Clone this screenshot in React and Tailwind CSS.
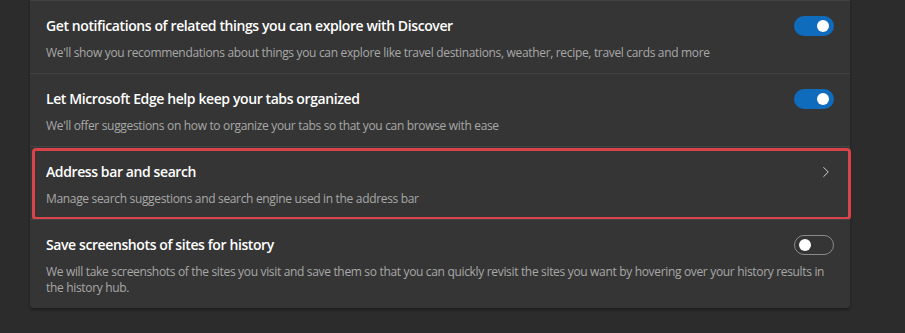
import { ChevronRight } from 'lucide-react';

const rows = [
    {
        title: 'Get notifications of related things you can explore with Discover',
        desc: "We'll show you recommendations about things you can explore like travel destinations, weather, recipe, travel cards and more",
        control: 'on',
    },
    {
        title: 'Let Microsoft Edge help keep your tabs organized',
        desc: "We'll offer suggestions on how to organize your tabs so that you can browse with ease",
        control: 'on',
    },
    {
        title: 'Address bar and search',
        desc: 'Manage search suggestions and search engine used in the address bar',
        control: 'chevron',
        highlight: true,
    },
    {
        title: 'Save screenshots of sites for history',
        desc: 'We will take screenshots of the sites you visit and save them so that you can quickly revisit the sites you want by hovering over your history results in the history hub.',
        control: 'off',
    },
];

const Toggle = ({ on }) =>
    on ? (
        <div className="w-[40px] h-[20px] rounded-full bg-[#0f6cbd] flex items-center justify-end pr-[5px]">
            <div className="w-[12px] h-[12px] rounded-full bg-white" />
        </div>
    ) : (
        <div className="w-[40px] h-[20px] rounded-full border border-[#8a8a8a] flex items-center pl-[4px]">
            <div className="w-[12px] h-[12px] rounded-full bg-white" />
        </div>
    );

const Row = ({ row }) => (
    <div className="relative px-4 pt-[15px] pb-[12px] border-t border-[#424242]">
        <div className="flex items-center">
            <div className="flex-1 text-[14px] leading-[20px] font-semibold text-white tracking-[-0.4px]">{row.title}</div>
            {row.control === 'chevron' ? (
                <ChevronRight size={18} strokeWidth={1.3} className="text-[#d8d8d8] -mr-[1px]" />
            ) : (
                <Toggle on={row.control === 'on'} />
            )}
        </div>
        <div className="text-[12px] leading-[16px] mt-[9px] text-[#a8a8a8] tracking-[-0.33px]">{row.desc}</div>
        {row.highlight && (
            <div className="absolute left-[2px] -right-[1px] top-[1px] -bottom-[1px] border-[3px] border-[#d9434a] rounded-[4px]" />
        )}
    </div>
);

export default function App() {
    return (
        <div
            className="w-[905px] h-[333px] bg-[#2c2c2c] pl-[30px] pr-[55px] overflow-hidden"
            style={{ fontFamily: '"Segoe UI", "Open Sans", "Noto Sans", sans-serif' }}
        >
            <div className="bg-[#353535] rounded-b-[4px] shadow-[0_2px_3px_rgba(0,0,0,0.35)]">
                {rows.map((row, i) => (
                    <Row key={i} row={row} />
                ))}
            </div>
        </div>
    );
}
